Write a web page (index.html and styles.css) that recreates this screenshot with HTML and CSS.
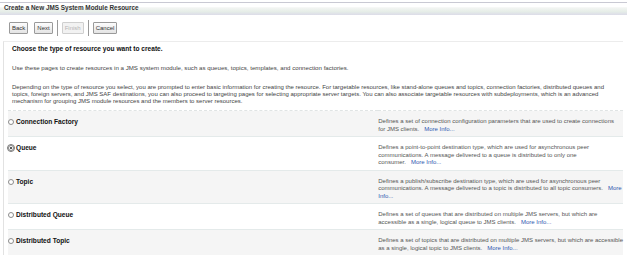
FILE: index.html
```html
<!DOCTYPE html>
<html lang="en">
<head>
    <meta charset="UTF-8">
    <title>Create a New JMS System Module Resource</title>
    <link rel="stylesheet" href="styles.css">
</head>
<body>
    <div class="title-bar">
        <h1>Create a New JMS System Module Resource</h1>
    </div>

    <div class="toolbar">
        <button class="btn">Back</button>
        <button class="btn">Next</button>
        <span class="sep"></span>
        <button class="btn" disabled>Finish</button>
        <span class="sep"></span>
        <button class="btn">Cancel</button>
    </div>

    <div class="panel">
        <h2>Choose the type of resource you want to create.</h2>
        <p class="intro">Use these pages to create resources in a JMS system module, such as queues, topics, templates, and connection factories.</p>
        <p class="info">Depending on the type of resource you select, you are prompted to enter basic information for creating the resource. For targetable resources, like stand-alone queues and topics, connection factories, distributed queues and<br>topics, foreign servers, and JMS SAF destinations, you can also proceed to targeting pages for selecting appropriate server targets. You can also associate targetable resources with subdeployments, which is an advanced<br>mechanism for grouping JMS module resources and the members to server resources.</p>

        <table class="choices">
            <tr class="odd">
                <td class="label"><span class="radio"></span>Connection Factory</td>
                <td class="desc">Defines a set of connection configuration parameters that are used to create connections<br>for JMS clients. &nbsp; <a href="#">More Info...</a></td>
            </tr>
            <tr>
                <td class="label"><span class="radio checked"></span>Queue</td>
                <td class="desc">Defines a point-to-point destination type, which are used for asynchronous peer<br>communications. A message delivered to a queue is distributed to only one<br>consumer. &nbsp; <a href="#">More Info...</a></td>
            </tr>
            <tr class="odd">
                <td class="label"><span class="radio"></span>Topic</td>
                <td class="desc">Defines a publish/subscribe destination type, which are used for asynchronous peer<br>communications. A message delivered to a topic is distributed to all topic consumers. &nbsp; <a href="#">More</a><br><a href="#">Info...</a></td>
            </tr>
            <tr>
                <td class="label"><span class="radio"></span>Distributed Queue</td>
                <td class="desc">Defines a set of queues that are distributed on multiple JMS servers, but which are<br>accessible as a single, logical queue to JMS clients. &nbsp; <a href="#">More Info...</a></td>
            </tr>
            <tr class="odd last">
                <td class="label"><span class="radio"></span>Distributed Topic</td>
                <td class="desc">Defines a set of topics that are distributed on multiple JMS servers, but which are accessible<br>as a single, logical topic to JMS clients. &nbsp; <a href="#">More Info...</a></td>
            </tr>
        </table>
    </div>
</body>
</html>
```

FILE: styles.css
```css
/* Page */
body {
    margin: 0;
    background: #fff;
    font-family: 'Liberation Sans', Arial, sans-serif;
    font-size: 6px;
    color: #444;
}

/* Title bar */
.title-bar {
    margin-top: 2px;
    border-top: 1px solid #c9c9d3;
    height: 12px;
    background: linear-gradient(to bottom, #fff 0%, #fff 30%, #f3f5f3 40%, #e6eee8 70%, #dcdce8 100%);
}

.title-bar h1 {
    margin: 0;
    padding-left: 4px;
    font-size: 6.4px;
    line-height: 10px;
    font-weight: bold;
    color: #333;
}

/* Wizard buttons */
.toolbar {
    display: flex;
    align-items: center;
    padding: 5px 0 5px 9px;
    gap: 6px;
}

.btn {
    height: 12px;
    padding: 0 2px;
    font-family: inherit;
    font-size: 6px;
    color: #333;
    background: linear-gradient(to bottom, #fdfdfd, #e4e4e4);
    border: 1px solid #9a9a9a;
    border-radius: 1px;
}

.btn:disabled {
    color: #b5b5b5;
    border-color: #cfcfcf;
    background: #f2f2f2;
}

.sep {
    width: 1px;
    height: 16px;
    background: #9a9a9a;
    margin: 0 -2px;
}

/* Content panel */
.panel {
    margin: 0 4px 0 3px;
    border-top: 1px solid #ececec;
    border-left: 1px solid #e2e2e2;
    padding-left: 4px;
}

.panel h2 {
    margin: 0 0 0 4px;
    padding-top: 3px;
    font-size: 6.6px;
    line-height: 8px;
    font-weight: bold;
    color: #111;
}

.intro,
.info {
    margin: 11px 0 0 4px;
    line-height: 7px;
    white-space: nowrap;
}

.intro {
    font-size: 6.15px;
}

.info {
    margin-top: 13px;
}

/* Resource type table */
.choices {
    width: 100%;
    margin-top: 5px;
    border-collapse: collapse;
    border-top: 1px dashed #e0e4e4;
}

.choices tr {
    border-bottom: 1px solid #e4eaea;
}

.choices tr.odd {
    background: #f5f5f5;
}

.choices tr.last {
    border-bottom: 1px dashed #e0e4e4;
}

.choices td {
    padding: 7px 0 3px 0;
    vertical-align: top;
    line-height: 7.5px;
}

.label {
    width: 371px;
    font-weight: bold;
    font-size: 6.6px;
    color: #111;
}

.desc {
    white-space: nowrap;
    color: #555;
}

.desc a {
    color: #2e58b0;
    text-decoration: none;
}

.radio {
    display: inline-block;
    width: 4px;
    height: 4px;
    margin: 0 2px 0 0;
    border: 1px solid #8c8c8c;
    border-radius: 50%;
    background: #fff;
    vertical-align: -1px;
    position: relative;
}

.radio.checked {
    outline: 1px solid #777;
    outline-offset: 0;
}

.radio.checked::after {
    content: "";
    position: absolute;
    left: 1px;
    top: 1px;
    width: 2px;
    height: 2px;
    border-radius: 50%;
    background: #222;
}
```
